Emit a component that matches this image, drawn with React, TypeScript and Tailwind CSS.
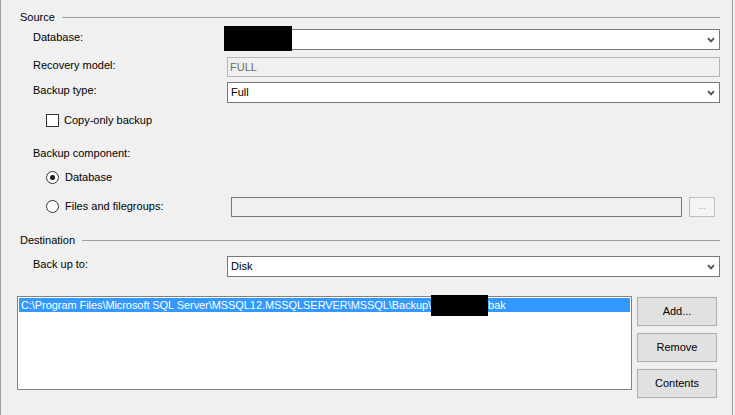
import React from 'react';

// little down chevron used by every combo box
function Chevron() {
  return (
    <svg width="8" height="6" viewBox="0 0 8 6" className="shrink-0">
      <path d="M1 1.2 L4 4.4 L7 1.2" fill="none" stroke="#505050" strokeWidth="1.8" />
    </svg>
  );
}

function Combo({ value, children }: any) {
  return (
    <div className="relative flex-1 h-[21px] border border-[#7a7a7a] bg-white flex items-center pl-[3px] pr-[4px]">
      <span className="flex-1 leading-none">{value}</span>
      <Chevron />
      {children}
    </div>
  );
}

function Header({ title }: any) {
  return (
    <div className="h-[16px] flex items-center gap-[7px]">
      <span className="leading-none">{title}</span>
      <div className="flex-1 h-px bg-[#a0a0a0]" />
    </div>
  );
}

function Radio({ checked }: any) {
  return (
    <span className="w-[13px] h-[13px] rounded-full border border-[#333333] bg-white flex items-center justify-center shrink-0">
      {checked && <span className="w-[5px] h-[5px] rounded-full bg-[#1a1a1a]" />}
    </span>
  );
}

function Button({ label }: any) {
  return (
    <button className="w-[80px] h-[29px] bg-[#e1e1e1] border border-[#adadad] text-black leading-none">
      {label}
    </button>
  );
}

export default function App() {
  return (
    <div className="w-[735px] h-[415px] bg-[#f0f0f0] flex text-[11px] text-black font-['Liberation_Sans',Arial,sans-serif] overflow-hidden">
      <div className="w-[733px] h-full border-l border-r border-[#a0a0a0] flex flex-col pl-[19px] pr-[12px]">

        {/* Source */}
        <div className="mt-[9px]">
          <Header title="Source" />
        </div>

        <div className="pl-[13px] flex flex-col">
          <div className="mt-[4px] flex items-center h-[21px]">
            <span className="w-[194px] -mt-[4px]">Database:</span>
            <Combo value="">
              <div className="absolute -left-[4px] -top-[4px] w-[68px] h-[25px] bg-black" />
            </Combo>
          </div>

          <div className="mt-[7px] flex items-center h-[20px]">
            <span className="w-[194px] -mt-[4px]">Recovery model:</span>
            <div className="flex-1 h-[20px] border border-[#b4b4b4] flex items-center pl-[2px] text-[#6d6d6d]">FULL</div>
          </div>

          <div className="mt-[5px] flex items-center h-[21px]">
            <span className="w-[194px] -mt-[4px]">Backup type:</span>
            <Combo value="Full" />
          </div>

          <div className="mt-[11px] ml-[13px] flex items-center h-[13px] gap-[5px]">
            <span className="w-[13px] h-[13px] border border-[#333333] bg-white shrink-0" />
            <span>Copy-only backup</span>
          </div>

          <div className="mt-[18px] h-[16px] flex items-center">Backup component:</div>

          <div className="mt-[6px] ml-[13px] h-[20px] flex items-center gap-[6px]">
            <Radio checked />
            <span>Database</span>
          </div>

          <div className="mt-[10px] ml-[13px] h-[20px] flex items-center">
            <div className="w-[185px] flex items-center gap-[6px] -mt-[2px]">
              <Radio />
              <span>Files and filegroups:</span>
            </div>
            <div className="flex-1 h-[20px] border border-[#7a7a7a]" />
            <div className="ml-[7px] mr-[5px] w-[26px] h-[20px] border border-[#bfbfbf] bg-[#f4f4f4] flex items-center justify-center text-[#a0a0a0] text-[9px]">...</div>
          </div>
        </div>

        {/* Destination */}
        <div className="mt-[15px]">
          <Header title="Destination" />
        </div>

        <div className="pl-[13px] mt-[8px] flex items-center h-[21px]">
          <span className="w-[194px] -mt-[4px]">Back up to:</span>
          <Combo value="Disk" />
        </div>

        <div className="mt-[19px] -ml-[3px] flex gap-[5px]">
          <div className="w-[615px] h-[94px] border border-[#828282] bg-white p-px">
            <div className="h-[14px] bg-[#3399ff] text-white flex items-center pl-[2px] whitespace-nowrap">
              <span className="tracking-[-0.07px]">C:\Program Files\Microsoft SQL Server\MSSQL12.MSSQLSERVER\MSSQL\Backup\</span>
              <span className="w-[57px] h-[21px] bg-black shrink-0" />
              <span>bak</span>
            </div>
          </div>
          <div className="mt-[1px] flex flex-col gap-[7px]">
            <Button label="Add..." />
            <Button label="Remove" />
            <Button label="Contents" />
          </div>
        </div>

      </div>
    </div>
  );
}
